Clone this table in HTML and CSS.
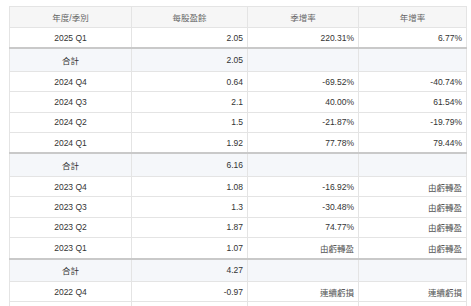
FILE: index.html
```html
<!DOCTYPE html>
<html lang="zh-Hant">
<head>
    <meta charset="UTF-8">
    <meta name="viewport" content="width=device-width, initial-scale=1.0">
    <title>每股盈餘</title>
    <link rel="stylesheet" href="styles.css">
</head>
<body>
    <table class="epsTable">
        <colgroup>
            <col class="colPeriod">
            <col class="colEps">
            <col class="colQoq">
            <col class="colYoy">
        </colgroup>
        <thead>
            <tr>
                <th>年度/季別</th>
                <th>每股盈餘</th>
                <th>季增率</th>
                <th>年增率</th>
            </tr>
        </thead>
        <tbody>
            <tr>
                <td class="period">2025 Q1</td>
                <td>2.05</td>
                <td>220.31%</td>
                <td>6.77%</td>
            </tr>
            <tr class="total">
                <td class="period">合計</td>
                <td>2.05</td>
                <td></td>
                <td></td>
            </tr>
            <tr>
                <td class="period">2024 Q4</td>
                <td>0.64</td>
                <td>-69.52%</td>
                <td>-40.74%</td>
            </tr>
            <tr>
                <td class="period">2024 Q3</td>
                <td>2.1</td>
                <td>40.00%</td>
                <td>61.54%</td>
            </tr>
            <tr>
                <td class="period">2024 Q2</td>
                <td>1.5</td>
                <td>-21.87%</td>
                <td>-19.79%</td>
            </tr>
            <tr>
                <td class="period">2024 Q1</td>
                <td>1.92</td>
                <td>77.78%</td>
                <td>79.44%</td>
            </tr>
            <tr class="total">
                <td class="period">合計</td>
                <td>6.16</td>
                <td></td>
                <td></td>
            </tr>
            <tr>
                <td class="period">2023 Q4</td>
                <td>1.08</td>
                <td>-16.92%</td>
                <td class="note">由虧轉盈</td>
            </tr>
            <tr>
                <td class="period">2023 Q3</td>
                <td>1.3</td>
                <td>-30.48%</td>
                <td class="note">由虧轉盈</td>
            </tr>
            <tr>
                <td class="period">2023 Q2</td>
                <td>1.87</td>
                <td>74.77%</td>
                <td class="note">由虧轉盈</td>
            </tr>
            <tr>
                <td class="period">2023 Q1</td>
                <td>1.07</td>
                <td class="note">由虧轉盈</td>
                <td class="note">由虧轉盈</td>
            </tr>
            <tr class="total">
                <td class="period">合計</td>
                <td>4.27</td>
                <td></td>
                <td></td>
            </tr>
            <tr>
                <td class="period">2022 Q4</td>
                <td>-0.97</td>
                <td class="note">連續虧損</td>
                <td class="note">連續虧損</td>
            </tr>
            <tr>
                <td class="period">2022 Q3</td>
                <td>-0.52</td>
                <td class="note">連續虧損</td>
                <td class="note">連續虧損</td>
            </tr>
        </tbody>
    </table>
</body>
</html>
```

FILE: styles.css
```css
body {
    margin: 0;
    background: #fff;
    font-family: "Liberation Sans", "Noto Sans CJK TC", sans-serif;
    font-size: 8.5px;
    color: #333;
    overflow: hidden;
}
.epsTable {
    margin: 6px 0 0 9px;
    width: 457px;
    border-collapse: collapse;
    table-layout: fixed;
}
.colPeriod { width: 122px; }
.colEps { width: 116px; }
.colQoq { width: 111px; }
.colYoy { width: 108px; }

.epsTable th,
.epsTable td {
    border: 1px solid #e4e4e4;
    padding: 0 4px;
    height: 19.4px;
    text-align: right;
    white-space: nowrap;
}
.epsTable th {
    height: 20px;
    background: #f6f6f6;
    color: #666;
    font-weight: normal;
    text-align: center;
}
.epsTable td.period { text-align: center; }
.epsTable td.note { color: #555; }

/* year total rows */
.epsTable .total td {
    height: 21.5px;
    background: #f5f7fa;
    border-top: 2px solid #c9c9c9;
}
```
